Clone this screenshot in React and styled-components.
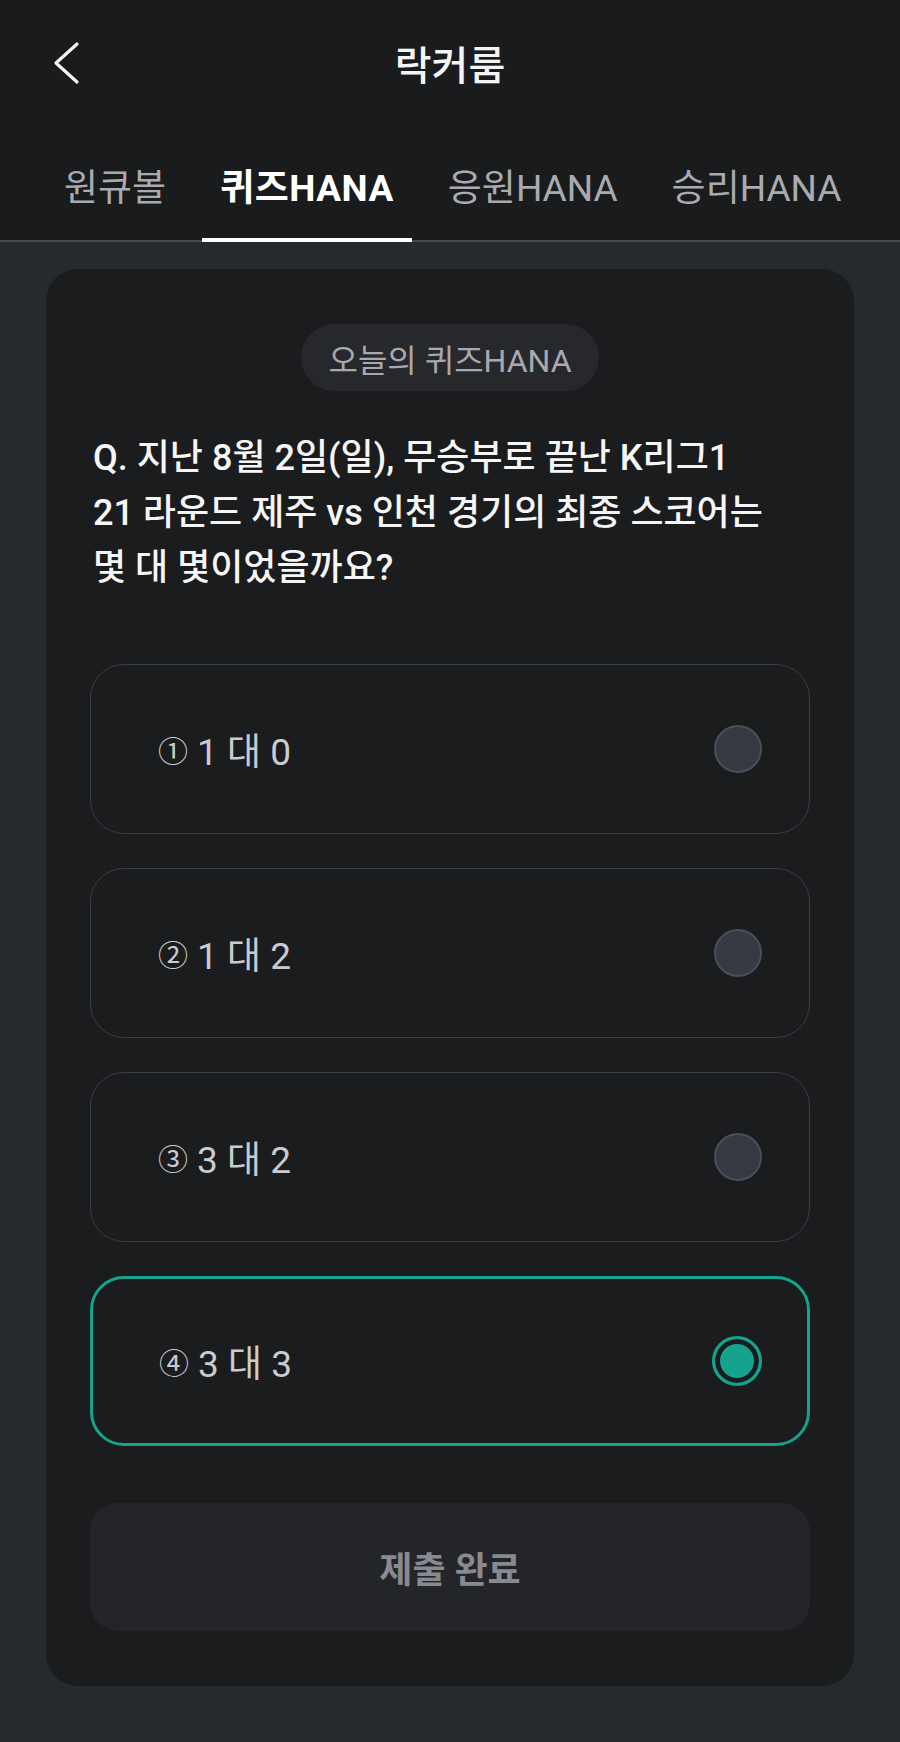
import styled, { createGlobalStyle } from 'styled-components';

const GlobalStyle = createGlobalStyle`
  * { box-sizing: border-box; }
  body {
    margin: 0;
    background: #252b2d;
    font-family: Roboto, "Noto Sans CJK KR", sans-serif;
  }
`;

const Page = styled.div`
  min-height: 1742px;
  display: flex;
  flex-direction: column;
`;

const Header = styled.header`
  background: #1a1b1d;
`;

const TopBar = styled.div`
  height: 126px;
  display: grid;
  grid-template-columns: 1fr auto 1fr;
  align-items: center;
  padding: 0 52px;
`;

const BackButton = styled.button`
  justify-self: start;
  width: 30px;
  height: 44px;
  padding: 0;
  border: 0;
  background: none;
  display: flex;
  align-items: center;
  justify-content: center;
  cursor: pointer;
`;

const Title = styled.h1`
  margin: 0;
  font-size: 40px;
  font-weight: 500;
  color: #f4f4f5;
`;

const TabBar = styled.nav`
  height: 116px;
  display: flex;
  align-items: flex-end;
  gap: 18px;
  padding: 0 46px;
  border-bottom: 2px solid #464b4e;
`;

const Tab = styled.div`
  position: relative;
  padding: 0 18px 27px;
  line-height: 48px;
  font-size: 37px;
  font-weight: ${(p) => (p.$active ? 700 : 400)};
  color: ${(p) => (p.$active ? '#ffffff' : '#a9abb0')};
  white-space: nowrap;
  letter-spacing: ${(p) => (p.$active ? '0.5px' : '0')};

  &::after {
    content: '';
    position: absolute;
    left: 0;
    right: 0;
    bottom: -2px;
    height: 4px;
    background: ${(p) => (p.$active ? '#ffffff' : 'transparent')};
  }
`;

const Main = styled.main`
  padding: 27px 46px 59px;
`;

const Card = styled.section`
  background: #1b1c1e;
  border-radius: 32px;
  padding: 55px 44px;
  display: flex;
  flex-direction: column;
`;

const Pill = styled.div`
  align-self: center;
  height: 67px;
  padding: 0 27px;
  border-radius: 34px;
  background: #26282c;
  color: #a6a9ae;
  font-size: 32px;
  display: flex;
  align-items: center;
`;

const Question = styled.p`
  margin: 40px 0 0;
  padding-left: 3px;
  font-size: 36px;
  line-height: 55px;
  font-weight: 500;
  color: #f5f5f6;
  white-space: nowrap;
`;

const Options = styled.div`
  margin-top: 68px;
  display: flex;
  flex-direction: column;
  gap: 34px;
`;

const Option = styled.label`
  height: 170px;
  border-radius: 34px;
  border: ${(p) => (p.$selected ? '3px solid #15a38d' : '1.5px solid #3a3d42')};
  display: flex;
  align-items: center;
  justify-content: space-between;
  padding: ${(p) => (p.$selected ? '0 45px 0 66px' : '0 47px 0 67px')};
  cursor: pointer;
`;

const OptionText = styled.span`
  display: flex;
  align-items: center;
  gap: 9px;
  font-size: 37px;
  color: #c9cbcf;
`;

const Mark = styled.span`
  font-size: 30px;
`;

const Radio = styled.span`
  width: ${(p) => (p.$checked ? '50px' : '48px')};
  height: ${(p) => (p.$checked ? '50px' : '48px')};
  border-radius: 50%;
  border: ${(p) => (p.$checked ? '3px solid #15a38d' : '2px solid #4a4f57')};
  background: ${(p) => (p.$checked ? '#15a38d' : '#363a42')};
  box-shadow: ${(p) => (p.$checked ? 'inset 0 0 0 5px #1b1c1e' : 'none')};
`;

const Submit = styled.button`
  margin-top: 57px;
  height: 128px;
  width: 100%;
  border: 0;
  border-radius: 28px;
  background: #232528;
  color: #878a90;
  font-family: inherit;
  font-size: 36px;
  font-weight: 700;
`;

const tabs = ['원큐볼', '퀴즈HANA', '응원HANA', '승리HANA'];

const answers = [
  { mark: '①', text: '1 대 0' },
  { mark: '②', text: '1 대 2' },
  { mark: '③', text: '3 대 2' },
  { mark: '④', text: '3 대 3' },
];

export default function App() {
  const selected = 3;

  return (
    <Page>
      <GlobalStyle />
      <Header>
        <TopBar>
          <BackButton aria-label="뒤로">
            <svg width="30" height="44" viewBox="0 0 30 44" fill="none">
              <polyline
                points="25,3 4,22 25,41"
                stroke="#f4f4f5"
                strokeWidth="3.2"
                strokeLinecap="round"
                strokeLinejoin="round"
              />
            </svg>
          </BackButton>
          <Title>락커룸</Title>
        </TopBar>
        <TabBar>
          {tabs.map((t) => (
            <Tab key={t} $active={t === '퀴즈HANA'}>{t}</Tab>
          ))}
        </TabBar>
      </Header>
      <Main>
        <Card>
          <Pill>오늘의 퀴즈HANA</Pill>
          <Question>
            Q. 지난 8월 2일(일), 무승부로 끝난 K리그1
            <br />
            21 라운드 제주 vs 인천 경기의 최종 스코어는
            <br />
            몇 대 몇이었을까요?
          </Question>
          <Options>
            {answers.map((a, i) => (
              <Option key={a.mark} $selected={i === selected}>
                <OptionText>
                  <Mark>{a.mark}</Mark>
                  {a.text}
                </OptionText>
                <Radio $checked={i === selected} />
              </Option>
            ))}
          </Options>
          <Submit>제출 완료</Submit>
        </Card>
      </Main>
    </Page>
  );
}
